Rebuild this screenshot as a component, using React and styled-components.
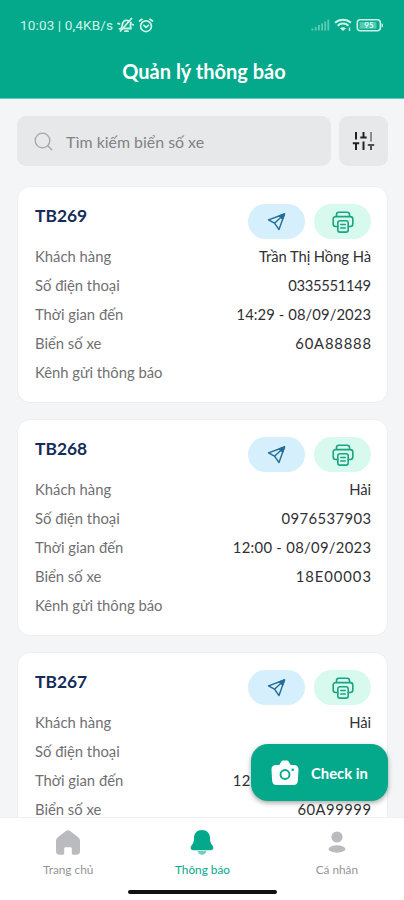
import React from 'react';
import styled, { createGlobalStyle } from 'styled-components';

const color = {
    green: '#04a98b',
    page: '#f4f5f7',
    field: '#e7e8ea',
    navy: '#152c5b',
    label: '#707072',
    muted: '#949598',
};

const GlobalStyle = createGlobalStyle`
    * { box-sizing: border-box; }
    body {
        margin: 0;
        font-family: Lato, 'Noto Sans', sans-serif;
        background: ${color.page};
    }
    button { border: 0; padding: 0; font-family: inherit; }
`;

const Screen = styled.div`
    position: relative;
    width: 404px;
    height: 900px;
    display: flex;
    flex-direction: column;
    overflow: hidden;
    background: ${color.page};
`;

// header
const Header = styled.header`
    flex: none;
    height: 99px;
    background: ${color.green};
    color: white;
    border-bottom: 1px solid #5fcbb8;
`;

const StatusBar = styled.div`
    height: 50px;
    padding: 0 20px;
    display: flex;
    align-items: center;
    justify-content: space-between;
    color: #cdf3e8;
`;

const StatusGroup = styled.div`
    display: flex;
    align-items: center;
    gap: 4px;
`;

const Clock = styled.span`
    font-family: Roboto, sans-serif;
    font-size: 13.5px;
    letter-spacing: 0.15px;
    white-space: nowrap;
`;

const Title = styled.h1`
    margin: 0;
    line-height: 42px;
    font-size: 20px;
    font-weight: 700;
    text-align: center;
    padding-left: 4px;
`;

// search
const SearchRow = styled.div`
    flex: none;
    display: flex;
    gap: 8px;
    padding: 17px 16px 20px 17px;
`;

const SearchBox = styled.label`
    flex: 1;
    height: 50px;
    display: flex;
    align-items: center;
    gap: 13px;
    padding-left: 17px;
    border-radius: 9px;
    background: ${color.field};
    color: #818285;
    font-size: 15.9px;
`;

const FilterButton = styled.button`
    width: 49px;
    height: 50px;
    display: flex;
    align-items: center;
    justify-content: center;
    border-radius: 9px;
    background: ${color.field};
`;

// cards
const List = styled.main`
    flex: 1;
    min-height: 0;
    overflow: hidden;
    display: flex;
    flex-direction: column;
    gap: 16px;
    padding: 0 16px 0 17px;
`;

const Card = styled.article`
    flex: none;
    height: 217px;
    padding: 17px 16px 0 17px;
    border: 1px solid #eceef1;
    border-radius: 13px;
    background: white;
`;

const CardHead = styled.div`
    display: flex;
    justify-content: space-between;
    margin-bottom: 3px;
`;

const Code = styled.h2`
    margin: 0;
    line-height: 24px;
    font-size: 17.4px;
    font-weight: 700;
    color: ${color.navy};
`;

const Actions = styled.div`
    display: flex;
    gap: 9px;
`;

const Pill = styled.button`
    width: 57px;
    height: 35px;
    display: flex;
    align-items: center;
    justify-content: center;
    border-radius: 18px;
    background: ${props => props.$bg};
`;

const Row = styled.div`
    display: flex;
    justify-content: space-between;
    height: 28.9px;
    line-height: 28.9px;
    font-size: 14.8px;
`;

const Label = styled.span`
    color: ${color.label};
`;

const Value = styled.span`
    color: #303033;
    letter-spacing: ${props => props.$tracking || 0}px;
    margin-right: ${props => -(props.$tracking || 0)}px;
`;

// floating button over the list
const CheckIn = styled.button`
    position: absolute;
    right: 16px;
    bottom: 99px;
    width: 137px;
    height: 57px;
    display: flex;
    align-items: center;
    gap: 12px;
    padding-left: 20px;
    border-radius: 17px;
    background: ${color.green};
    color: white;
    font-size: 14.8px;
    font-weight: 700;
    white-space: nowrap;
    box-shadow: 0 2px 5px rgba(0, 0, 0, 0.35);
`;

// bottom navigation
const BottomBar = styled.footer`
    flex: none;
    height: 83px;
    display: flex;
    flex-direction: column;
    align-items: center;
    background: white;
    border-top: 1px solid #f0f0f1;
`;

const Tabs = styled.nav`
    width: 100%;
    height: 72px;
    padding-left: 1px;
    display: grid;
    grid-template-columns: repeat(3, 1fr);
`;

const Tab = styled.div`
    display: flex;
    flex-direction: column;
    align-items: center;
    padding-top: 11px;
    gap: 5px;
    font-size: 11.8px;
    line-height: 18px;
    color: ${props => props.$active ? color.green : color.muted};
`;

const HomeIndicator = styled.div`
    width: 149px;
    height: 4px;
    border-radius: 2px;
    background: #111;
`;

const MuteIcon = () => (
    <svg width="17" height="16" viewBox="0 0 17 16" fill="none" stroke="currentColor" strokeWidth="1.8" strokeLinecap="round">
        <path d="M4 11.5c1.5-1.5 1-4 2-6 1-2.2 4-3 6-1M2.5 11.8h3M14 5.5c-1 1.5-.6 4-.2 6H7" />
        <path d="M14.5 1.5 3.5 14M8 14.2h3M1 6.5l1.5.3M15.2 7.5l1.3.4" />
    </svg>
);

const AlarmIcon = () => (
    <svg width="16" height="15" viewBox="0 0 15 15" fill="none" stroke="currentColor" strokeWidth="1.7" strokeLinecap="round">
        <circle cx="7.5" cy="8.2" r="5.4" />
        <path d="M1 3 3.5 1.2M14 3l-2.5-1.8M5.3 7.3l2.2 2 2.4-2" />
    </svg>
);

const SignalIcon = () => (
    <svg width="19" height="12" viewBox="0 0 19 12" fill="#5ccbb3">
        <rect x="0.5" y="9.5" width="1.8" height="2" />
        <rect x="3.8" y="8" width="1.8" height="3.5" />
        <rect x="7" y="6" width="1.8" height="5.5" />
        <rect x="10.2" y="4.5" width="1.8" height="7" />
        <rect x="13.3" y="2.5" width="1.8" height="9" />
        <rect x="16.4" y="0.5" width="1.8" height="11" />
    </svg>
);

const WifiIcon = () => (
    <svg width="18" height="14" viewBox="0 0 18 14" fill="none" stroke="currentColor" strokeWidth="2">
        <path d="M1 4.8c4.5-4.2 11.5-4.2 16 0M3.6 7.7c3-2.8 7.8-2.8 10.8 0" />
        <path d="M6 10.3c1.7-1.5 4.3-1.5 6 0L9 13z" fill="currentColor" stroke="none" />
        <path d="M15.5 9.5v3.5" strokeWidth="1.4" />
    </svg>
);

const BatteryIcon = () => (
    <svg width="28" height="13" viewBox="0 0 27 13">
        <rect x="0.8" y="0.8" width="23" height="11" rx="3" fill="none" stroke="currentColor" strokeWidth="1.5" />
        <path d="M25 4.3c2 .4 2 4 0 4.4z" fill="currentColor" />
        <rect x="3" y="3" width="17" height="6.7" rx="1" fill="#55c8b1" />
        <text x="12.5" y="9.4" fontSize="8" fontWeight="700" textAnchor="middle" fill="#dcfff5">95</text>
    </svg>
);

const SearchIcon = () => (
    <svg width="19" height="19" viewBox="0 0 19 19" fill="none" stroke="#a4a5a8" strokeWidth="1.3" strokeLinecap="round">
        <circle cx="8.5" cy="8.5" r="7.3" />
        <path d="m14 14 3.7 3.7" />
    </svg>
);

const SlidersIcon = () => (
    <svg width="23" height="20" viewBox="0 0 23 20" fill="none" strokeWidth="2">
        <path d="M4 1v7.5M.8 12.2h6.4M4 12.2V19" stroke="#222327" />
        <path d="M11.5 1v5M8.3 6.5h6.4M11.5 10.5V19" stroke="#222327" />
        <path d="M19 1v9.5" stroke="#8b8c8f" />
        <path d="M15.8 14h6.4M19 14v5" stroke="#4f5054" />
    </svg>
);

const SendIcon = () => (
    <svg width="19" height="18" viewBox="0 0 19 18" fill="none" stroke="#246d96" strokeWidth="1.4" strokeLinejoin="round">
        <path d="M17.5 1 1.5 6.8l6 3.4 4.5 6.3z" />
        <path d="M17.5 1 7.5 10.2" />
        <path d="m17.5 1-5.3 2 3.5 3z" fill="#246d96" />
    </svg>
);

const PrinterIcon = () => (
    <svg width="22" height="22" viewBox="0 0 22 22" fill="none" stroke="#18a581" strokeWidth="1.6" strokeLinejoin="round" strokeLinecap="round">
        <path d="M4.5 5.2V3.5c0-1.500.8-2.300 2.300-2.300h8.400c1.500 0 2.300.8 2.300 2.300v1.700" />
        <path d="M5.8 15.500H3.700c-1.600 0-2.500-.9-2.500-2.500V8.100c0-1.600.9-2.500 2.500-2.500h14.600c1.600 0 2.500.9 2.500 2.500V13c0 1.600-.9 2.500-2.500 2.500h-2.100" />
        <rect x="5.800" y="9.700" width="10.400" height="11.400" rx="2.200" />
        <path d="M8.800 13.500h4.400M8.800 17h4.400" />
    </svg>
);

const CameraIcon = () => (
    <svg width="28" height="26" viewBox="0 0 28 26">
        <path d="M5 5h2.8c1.5 0 2-4.5 4.2-4.5h4c2.2 0 2.7 4.5 4.2 4.5H23c3 0 4.6 1.8 4.5 4.5l-.6 11c-.2 3-1.8 4.5-4.5 4.5H5.6c-2.7 0-4.3-1.5-4.5-4.5l-.6-11C.4 6.8 2 5 5 5z" fill="white" />
        <circle cx="14" cy="14.5" r="4.5" fill="none" stroke="#04a98b" strokeWidth="1.9" />
        <circle cx="21.7" cy="9.7" r="1.3" fill="#04a98b" />
    </svg>
);

const HomeIcon = () => (
    <svg width="26" height="27" viewBox="0 0 26 27">
        <path d="M10.8 2.1c1.3-1 3.1-1 4.4 0l7.6 5.8c1.4 1.1 2.2 2.3 2.2 4v10.6c0 2-1.2 3.2-3.2 3.2h-3.5c-1 0-1.5-.6-1.5-1.5v-4.4c0-1-.5-1.500-1.500-1.500h-4.600c-1 0-1.500.5-1.500 1.500v4.400c0 .9-.5 1.500-1.500 1.500H4.200c-2 0-3.200-1.200-3.200-3.200V11.900c0-1.700.8-2.900 2.200-4z" fill="#b9bbbe" />
    </svg>
);

const BellIcon = () => (
    <svg width="26" height="27" viewBox="0 0 26 27">
        <path d="M8.5 22h9c-.6 2.4-2.2 3.7-4.5 3.7S9.1 24.4 8.5 22z" fill="#6fd0bc" />
        <path d="M13 1c4.9 0 8 3.3 8 7.9 0 3.3.6 5.1 2.3 7.4 2 2.7 1.2 5-2.3 5H5c-3.5 0-4.3-2.3-2.3-5C4.4 14 5 12.2 5 8.9 5 4.3 8.1 1 13 1z" fill="#04a98b" />
    </svg>
);

const UserIcon = () => (
    <svg width="26" height="27" viewBox="0 0 26 27" fill="#b9bbbe">
        <circle cx="13" cy="8" r="5.6" />
        <ellipse cx="13" cy="20" rx="8.5" ry="3.7" />
    </svg>
);

// phone and plate numbers are tracked per card, [phone, plate]
const notices = [
    { code: 'TB269', name: 'Trần Thị Hồng Hà', phone: '0335551149', time: '14:29 - 08/09/2023', plate: '60A88888', tracking: [-0.35, 0.8] },
    { code: 'TB268', name: 'Hải', phone: '0976537903', time: '12:00 - 08/09/2023', plate: '18E00003', tracking: [0.4, 0.95] },
    { code: 'TB267', name: 'Hải', phone: '0976537903', time: '12:00 - 08/09/2023', plate: '60A99999', tracking: [0.4, 0.5] },
];

const NoticeCard = ({ code, name, phone, time, plate, tracking }) => (
    <Card>
        <CardHead>
            <Code>{code}</Code>
            <Actions>
                <Pill $bg="#d5effc"><SendIcon /></Pill>
                <Pill $bg="#d8f9ee"><PrinterIcon /></Pill>
            </Actions>
        </CardHead>
        <Row><Label>Khách hàng</Label><Value $tracking={-0.08}>{name}</Value></Row>
        <Row><Label>Số điện thoại</Label><Value $tracking={tracking[0]}>{phone}</Value></Row>
        <Row><Label>Thời gian đến</Label><Value $tracking={time.startsWith('12') ? 0.3 : 0.08}>{time}</Value></Row>
        <Row><Label>Biển số xe</Label><Value $tracking={tracking[1]}>{plate}</Value></Row>
        <Row><Label>Kênh gửi thông báo</Label></Row>
    </Card>
);

const App = () => (
    <Screen>
        <GlobalStyle />
        <Header>
            <StatusBar>
                <StatusGroup>
                    <Clock>10:03 | 0,4KB/s</Clock>
                    <MuteIcon />
                    <AlarmIcon />
                </StatusGroup>
                <StatusGroup>
                    <SignalIcon />
                    <WifiIcon />
                    <BatteryIcon />
                </StatusGroup>
            </StatusBar>
            <Title>Quản lý thông báo</Title>
        </Header>
        <SearchRow>
            <SearchBox><SearchIcon />Tìm kiếm biển số xe</SearchBox>
            <FilterButton><SlidersIcon /></FilterButton>
        </SearchRow>
        <List>
            {notices.map(notice => <NoticeCard key={notice.code} {...notice} />)}
        </List>
        <CheckIn><CameraIcon />Check in</CheckIn>
        <BottomBar>
            <Tabs>
                <Tab><HomeIcon />Trang chủ</Tab>
                <Tab $active><BellIcon />Thông báo</Tab>
                <Tab><UserIcon />Cá nhân</Tab>
            </Tabs>
            <HomeIndicator />
        </BottomBar>
    </Screen>
);

export default App;
